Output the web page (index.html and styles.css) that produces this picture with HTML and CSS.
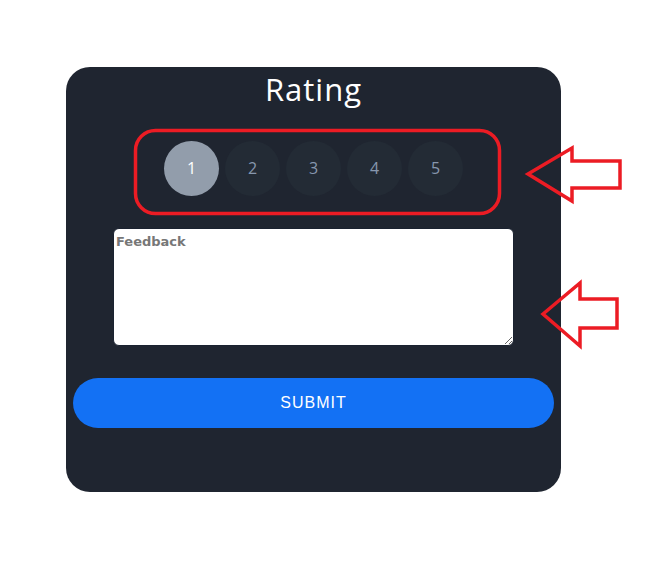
FILE: index.html
```html
<!DOCTYPE html>
<html>
<head>
<meta charset="utf-8">
<link rel="stylesheet" href="styles.css">
</head>
<body>
<div class="page">
  <form class="card">
    <h2 class="title">Rating</h2>
    <div class="rates">
      <button type="button" class="rate active">1</button>
      <button type="button" class="rate">2</button>
      <button type="button" class="rate">3</button>
      <button type="button" class="rate">4</button>
      <button type="button" class="rate">5</button>
    </div>
    <textarea class="feedback" placeholder="Feedback"></textarea>
    <button type="button" class="submit">SUBMIT</button>
  </form>
  <svg class="marks" width="645" height="570" viewBox="0 0 645 570">
    <rect x="135.5" y="130.5" width="364" height="83" rx="20" ry="20" fill="none" stroke="#ec1c24" stroke-width="3.5"/>
    <polygon points="528,174 572,148 572,161 620,161 620,188 572,188 572,201" fill="none" stroke="#ec1c24" stroke-width="3.5" stroke-linejoin="miter"/>
    <polygon points="543,314 580,283 580,299 617,299 617,328 580,328 580,346" fill="none" stroke="#ec1c24" stroke-width="3.5" stroke-linejoin="miter"/>
  </svg>
</div>
</body>
</html>
```

FILE: styles.css
```css
html, body {
  margin: 0;
  padding: 0;
  background: #ffffff;
}
.page {
  position: relative;
  width: 645px;
  height: 570px;
  padding-top: 67px;
  box-sizing: border-box;
}
.card {
  margin-left: 66px;
  width: 495px;
  height: 425px;
  box-sizing: border-box;
  background: #1f2530;
  border-radius: 24px;
  display: flex;
  flex-direction: column;
  align-items: center;
}
.title {
  margin: 0;
  height: 44px;
  line-height: 44px;
  font-family: "Open Sans", sans-serif;
  font-weight: 400;
  font-size: 31px;
  color: #ffffff;
  letter-spacing: 1px;
}
.rates {
  margin-top: 30px;
  display: flex;
  gap: 6px;
}
.rate {
  width: 55px;
  height: 55px;
  border-radius: 50%;
  border: none;
  padding: 0;
  background: #232b35;
  color: #8797ae;
  font-family: "Open Sans", sans-serif;
  font-size: 16px;
  line-height: 55px;
}
.rate.active {
  background: #929dab;
  color: #ffffff;
}
.feedback {
  margin-top: 32px;
  width: 401px;
  height: 118px;
  box-sizing: border-box;
  border: 1px solid #1a2230;
  border-radius: 6px;
  padding: 5px 2px;
  background: #ffffff;
  font-family: "DejaVu Sans", sans-serif;
  font-weight: bold;
  font-size: 13px;
}
.feedback::placeholder {
  color: #777777;
}
.submit {
  margin-top: 32px;
  width: 481px;
  height: 50px;
  border: none;
  border-radius: 25px;
  background: #1371f4;
  color: #ffffff;
  font-family: "Liberation Sans", sans-serif;
  font-size: 16px;
  letter-spacing: 1px;
}
.marks {
  position: absolute;
  left: 0;
  top: 0;
  pointer-events: none;
}
```
